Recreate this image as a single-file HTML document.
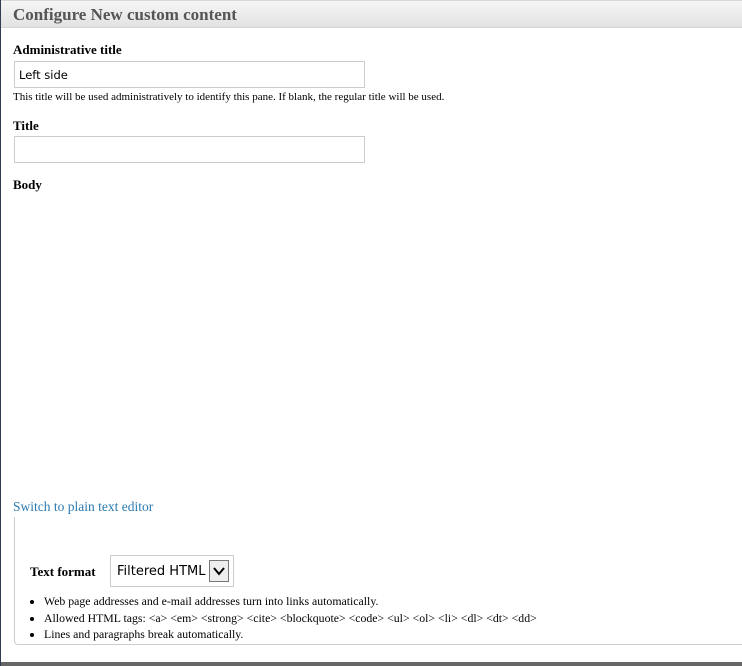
<!DOCTYPE html>
<html><head><style>
html,body{margin:0;padding:0;width:742px;height:666px;overflow:hidden;background:#fff;font-family:"Liberation Serif",serif;}
.wrap{position:absolute;left:0;top:0;width:742px;height:666px;border-left:1px solid #2c3e50;box-sizing:border-box;}
.hdr{position:absolute;left:0;top:0;right:0;height:28px;background:linear-gradient(#f6f6f6,#e2e2e2);border-top:1px solid #d8d8d8;border-bottom:1px solid #d4d4d4;box-sizing:border-box;}
.hdr span{position:absolute;left:12px;top:4px;font-weight:bold;font-size:17px;color:#555;}
.lbl{position:absolute;left:12px;font-weight:bold;font-size:13px;color:#000;}
.inp{position:absolute;left:13px;width:351px;height:27px;border:1px solid #ccc;box-sizing:border-box;font-family:"DejaVu Sans",sans-serif;font-size:11.5px;padding:6px 0 0 4px;}
.desc{position:absolute;left:12px;font-size:11px;}
a{color:#2a7ab0;text-decoration:none;}
.fs{position:absolute;left:13px;top:517px;width:740px;height:128px;border:1px solid #ccc;border-radius:0 0 0 4px;border-top:none;border-right:none;box-sizing:border-box;}
.sel{position:absolute;left:109px;top:555px;width:124px;height:32px;border:1px solid #ccc;box-sizing:border-box;font-family:"DejaVu Sans",sans-serif;font-size:13px;padding:8px 0 0 6px;}
.arr{position:absolute;left:98px;top:4px;width:20px;height:22px;border:1px solid #777;box-sizing:border-box;background:#eee;}
ul{position:absolute;left:29px;top:593px;margin:0;padding:0 0 0 14px;font-size:11.8px;line-height:16.5px;}
.bot{position:absolute;left:0;top:662px;width:742px;height:4px;background:#666;}
</style></head><body><div class="wrap">
<div class="hdr"><span>Configure New custom content</span></div>
<div class="lbl" style="top:42px">Administrative title</div>
<div class="inp" style="top:61px">Left side</div>
<div class="desc" style="top:91px">This title will be used administratively to identify this pane. If blank, the regular title will be used.</div>
<div class="lbl" style="top:118px">Title</div>
<div class="inp" style="top:136px"></div>
<div class="lbl" style="top:177px">Body</div>
<div style="position:absolute;left:12px;top:499px;font-size:13.5px"><a>Switch to plain text editor</a></div>
<div class="fs"></div>
<div class="lbl" style="left:29px;top:564px">Text format</div>
<div class="sel">Filtered HTML<div class="arr"><svg width="18" height="20"><path d="M4 7 L9 13 L14 7" stroke="#000" stroke-width="2" fill="none"/></svg></div></div>
<ul><li>Web page addresses and e-mail addresses turn into links automatically.</li>
<li>Allowed HTML tags: &lt;a&gt; &lt;em&gt; &lt;strong&gt; &lt;cite&gt; &lt;blockquote&gt; &lt;code&gt; &lt;ul&gt; &lt;ol&gt; &lt;li&gt; &lt;dl&gt; &lt;dt&gt; &lt;dd&gt;</li>
<li>Lines and paragraphs break automatically.</li></ul>
<div class="bot"></div>
</div></body></html>
